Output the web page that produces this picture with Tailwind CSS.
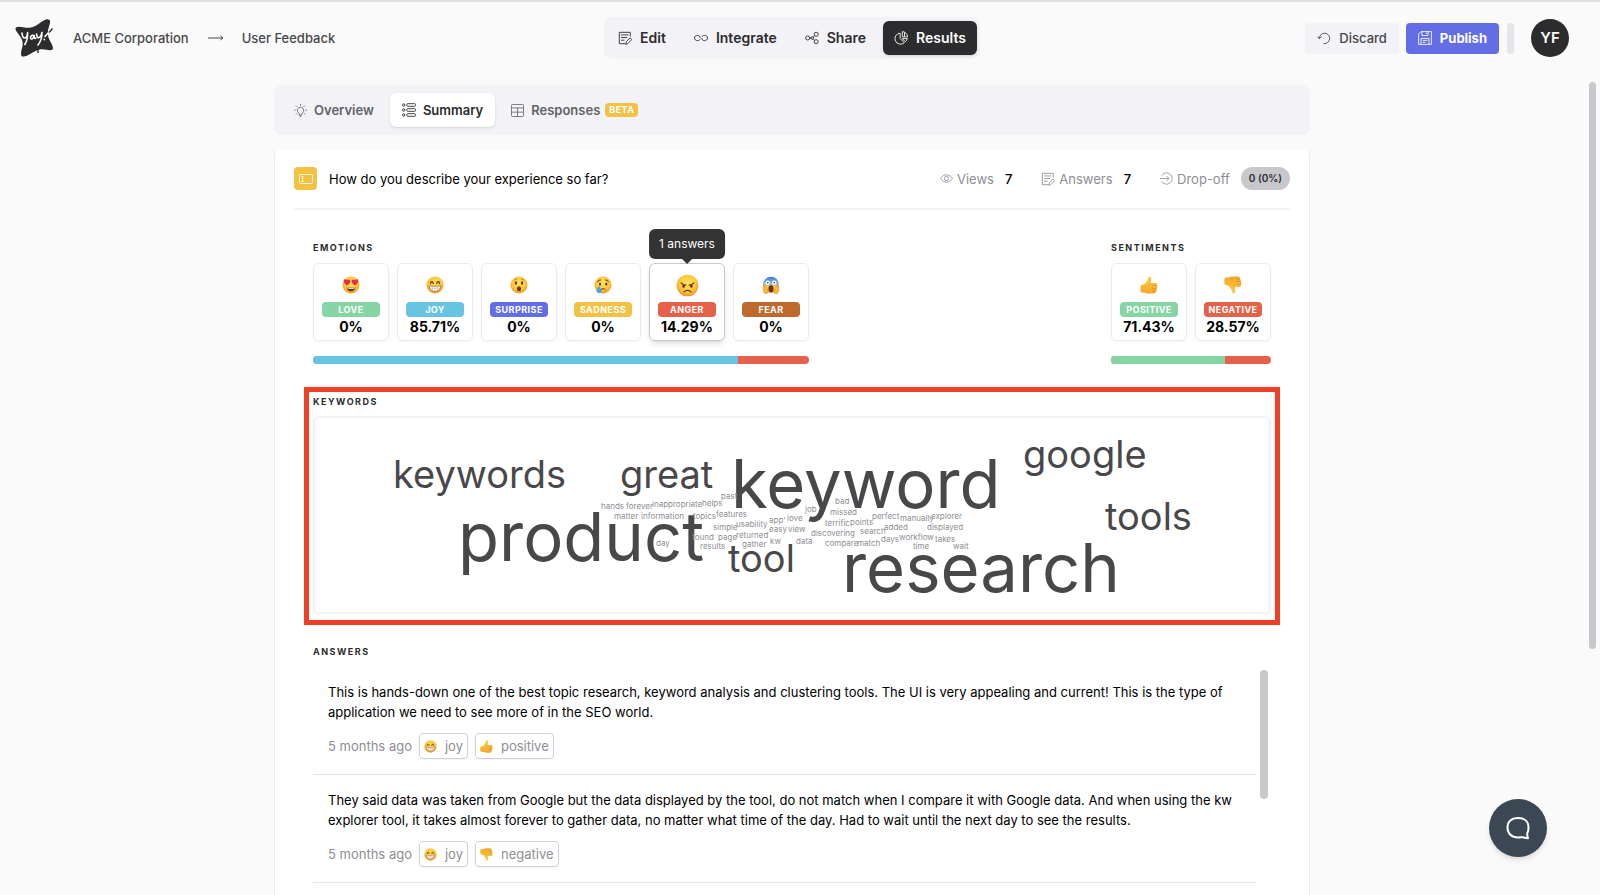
<!DOCTYPE html>
<html lang="en">
<head>
    <meta charset="UTF-8">
    <meta name="viewport" content="width=device-width, initial-scale=1.0">
    <title>User Feedback - Results</title>
    <script src="https://cdn.jsdelivr.net/npm/@tailwindcss/browser@4"></script>
</head>
<body class="relative flex h-screen flex-col overflow-hidden bg-[#fafafa] font-['Inter',sans-serif] text-[13px] leading-5 text-black">

    <!-- Shared icons and emoji -->
    <svg class="absolute size-0" aria-hidden="true">
        <defs>
            <radialGradient id="face" cx="50%" cy="40%" r="60%">
                <stop offset="0" stop-color="#ffe45c"/>
                <stop offset="0.65" stop-color="#fdc63a"/>
                <stop offset="1" stop-color="#ee932a"/>
            </radialGradient>
            <linearGradient id="fear" x1="0" y1="0" x2="0" y2="1">
                <stop offset="0" stop-color="#3d78dc"/>
                <stop offset="0.4" stop-color="#86b4ee"/>
                <stop offset="0.65" stop-color="#fccb45"/>
                <stop offset="1" stop-color="#f5a72f"/>
            </linearGradient>
            <linearGradient id="hand" x1="0" y1="0" x2="0" y2="1">
                <stop offset="0" stop-color="#ffd03f"/>
                <stop offset="1" stop-color="#f3a62c"/>
            </linearGradient>
        </defs>
        <symbol id="emoji-love" viewBox="0 0 36 36">
            <circle cx="18" cy="18" r="17" fill="url(#face)"/>
            <path d="M10.5 19C5 15 3 12.500 3.500 9.500c.6-3.400 5-4 6.800-.9 2.400-2.700 6.700-1.200 6.500 2.200-.2 3-2.600 5.500-6.300 8.200z" fill="#ee2b45"/>
            <path d="M25.500 19c5.500-4 7.500-6.500 7-9.500-.6-3.400-5-4-6.800-.9-2.400-2.700-6.700-1.200-6.500 2.200.2 3 2.600 5.500 6.300 8.200z" fill="#ee2b45"/>
            <path d="M9 22c5 2 13 2 18 0-.6 5.500-4 8.500-9 8.500S9.600 27.500 9 22z" fill="#6b3415"/>
            <path d="M10 22.600c5 1.600 11 1.600 16 0v1.800c-5 1.600-11 1.600-16 0z" fill="#fff"/>
        </symbol>
        <symbol id="emoji-joy" viewBox="0 0 36 36">
            <circle cx="18" cy="18" r="17" fill="url(#face)"/>
            <path d="M9 15c.6-5 4.800-5 5.500 0M21.500 15c.7-5 4.900-5 5.500 0" fill="none" stroke="#6b3415" stroke-width="2.600" stroke-linecap="round"/>
            <path d="M6.500 19.500c7 1.500 16 1.500 23 0 .2 6.500-4.500 11-11.500 11S6.300 26 6.500 19.500z" fill="#fff" stroke="#8a5020" stroke-width="1.300"/>
            <path d="M7.500 24.500h21M13 20.500v8.500M18 20.500v9.500M23 20.500v8.500" stroke="#b9a58d" stroke-width="1"/>
        </symbol>
        <symbol id="emoji-surprise" viewBox="0 0 36 36">
            <circle cx="18" cy="18" r="17" fill="url(#face)"/>
            <ellipse cx="12" cy="14" rx="2.300" ry="3.300" fill="#6b3415"/>
            <ellipse cx="24" cy="14" rx="2.300" ry="3.300" fill="#6b3415"/>
            <path d="M8.500 8.500c1-1.500 2.500-2.200 4.500-2M27.500 8.500c-1-1.500-2.500-2.200-4.500-2" fill="none" stroke="#a0641f" stroke-width="1.400" stroke-linecap="round"/>
            <ellipse cx="18" cy="25.500" rx="4.200" ry="5" fill="#6b3415"/>
        </symbol>
        <symbol id="emoji-sadness" viewBox="0 0 36 36">
            <circle cx="18" cy="18" r="17" fill="url(#face)"/>
            <ellipse cx="12" cy="16" rx="2.200" ry="3" fill="#6b3415"/>
            <ellipse cx="24.500" cy="16" rx="2.200" ry="3" fill="#6b3415"/>
            <path d="M7 11.500c1.500-2.500 3.500-3.500 6-3.500M29 11.500c-1.500-2.500-3.500-3.500-6-3.500M14 27.500c2.500-3 6.500-3 9 0" fill="none" stroke="#6b3415" stroke-width="2" stroke-linecap="round"/>
            <path d="M10 20c3.500 4.500 5 7 5 9.500 0 2.800-2.200 4.500-5 4.500s-5-1.700-5-4.500c0-2.500 1.500-5 5-9.500z" fill="#3fa5ee"/>
        </symbol>
        <symbol id="emoji-anger" viewBox="0 0 36 36">
            <circle cx="18" cy="18" r="17" fill="url(#face)"/>
            <ellipse cx="12" cy="19" rx="2" ry="2.500" fill="#6b3415"/>
            <ellipse cx="24" cy="19" rx="2" ry="2.500" fill="#6b3415"/>
            <path d="M8 14c2 2.300 4.500 3.300 7.500 3.300M28 14c-2 2.300-4.500 3.300-7.500 3.300M12.500 28c3-3 8-3 11 0" fill="none" stroke="#6b3415" stroke-width="2" stroke-linecap="round"/>
        </symbol>
        <symbol id="emoji-fear" viewBox="0 0 36 36">
            <circle cx="18" cy="17.500" r="16" fill="url(#fear)"/>
            <circle cx="11.500" cy="13.500" r="4.300" fill="#fff"/>
            <circle cx="24.500" cy="13.500" r="4.300" fill="#fff"/>
            <circle cx="11.500" cy="13.500" r="1.600" fill="#4a2b17"/>
            <circle cx="24.500" cy="13.500" r="1.600" fill="#4a2b17"/>
            <path d="M18 18.500c3.600 0 5 3 5 7s-1.800 7.500-5 7.500-5-3.500-5-7.500 1.400-7 5-7z" fill="#6b3415"/>
            <path d="M2.500 19c2-1.500 3.500.5 4.500 2.500l4.500 6.500c1.500 3 .5 7-2.500 7.500-4 .6-6.500-3-6.500-7zM33.500 19c-2-1.500-3.500.5-4.500 2.500L24.500 28c-1.500 3-.5 7 2.500 7.500 4 .6 6.500-3 6.500-7z" fill="#f9b637" stroke="#d9851f" stroke-width="1"/>
        </symbol>
        <symbol id="emoji-thumb" viewBox="0 0 36 36">
            <path d="M17.500 1c3-.8 4.800 1 4.900 4.500.1 3-.9 5.500-1.200 8.500h10.300c3.200 0 4.200 4 1.700 5.300 2.600 1.200 2.300 5-.4 5.700 1.700 1.400 1.200 4.600-1.200 5.100 1 2.300-.4 4.900-3.600 4.900H17c-3 0-5-1.400-7-1.700l-8.500-.8c-1-4.500-1-9.500 0-14.500l6.500-1c4-3.500 8-8.500 9.500-16z" fill="url(#hand)"/>
            <path d="M33 19.300h-7.500M32.500 25h-7M31.400 30.100h-5.900" stroke="#d98a1e" stroke-width="1.300" stroke-linecap="round"/>
            <path d="M21 14c-2 .8-3.200 2.500-3.400 4.500" fill="none" stroke="#e0951f" stroke-width="1.200" stroke-linecap="round"/>
        </symbol>
        <symbol id="icon-note" viewBox="0 0 16 16">
            <path d="M14 6V1.500H1.500v13H8M4 4.500h7.500M4 7.500h6M4 10.500h3M9 14.800l.5-2.600 4.300-4.300 1.900 1.900-4.300 4.300z" fill="none" stroke="currentColor" stroke-linejoin="round" stroke-linecap="round"/>
        </symbol>
    </svg>

    <header class="grid grid-cols-[1fr_auto_1fr] items-center border-t-2 border-[#e0e0e0] py-[15px] pr-[31px] pl-[15px]">
        <div class="flex items-center">
            <a href="#" aria-label="Yay! home">
                <svg class="size-[38px]" viewBox="0 0 38 38">
                    <path d="M1 8.500c3-2.300 8 .8 13.500.3C22 8 27 1 32 .3c3.600-.3 3.600 2.500 2.400 6-1.600 4.700-2.400 9-.2 14 1.500 3.500 5 8 3.300 10.200-2.500 2.300-8-1.300-13.500.2C18 32.300 13 37.300 8.500 37.600 4.800 37.600 6 33 7.300 28c1-4.500.2-6.800-2.500-11C2.300 13.200-.8 10.500 1 8.500z" fill="#2c2c2e"/>
                    <path d="M7 14c.3 3.500 1.200 5.300 3 5 1.400-.3 2.300-2.700 2.600-5.400M12.600 14c.2 4.500-.6 8-2.800 11.500M19 16.500c-2.200-.7-3.800.8-3.500 2.600.3 1.500 2.600 1.200 3.400-1.500l.3-1.200c-.2 2.200.2 3.400 1.500 2.800M21.600 15c.1 2.500.8 3.900 2.200 3.600 1.500-.3 2.500-2.500 3-5M27 13.600c.2 5.500-1.400 9-4 12.400M35.500 11.500l-5.500 6M29.300 20.400v.4" fill="none" stroke="#fff" stroke-width="1.600" stroke-linecap="round"/>
                    <path d="M37.500 9.500l-3.500 4M23 27v7" stroke="#2c2c2e" stroke-width="1.400"/>
                </svg>
            </a>
            <nav class="ml-5 flex items-center text-[#48484a]" aria-label="Breadcrumb">
                <a href="#" class="font-medium">ACME Corporation</a>
                <svg class="mr-[18px] ml-[19px] h-2 w-4" viewBox="0 0 16 8" fill="none" stroke="#48484a"><path d="M0 4h15M12.500 2L15 4l-2.500 2"/></svg>
                <a href="#" class="font-medium">User Feedback</a>
            </nav>
        </div>

        <nav class="flex gap-[6px] rounded-lg bg-[#f2f2f7] px-[3px] py-1 text-sm font-semibold text-[#2c2c2e]" aria-label="Form">
            <a href="#" class="flex h-[34px] items-center gap-2 px-[11px]">
                <svg class="size-[14px]"><use href="#icon-note"/></svg>Edit
            </a>
            <a href="#" class="flex h-[34px] items-center gap-2 px-[11px]">
                <svg class="size-[14px]" viewBox="0 0 16 16" fill="none" stroke="currentColor"><path d="M6.800 9.500C6.300 10.600 5.500 11 4 11 2 11 .6 9.800.6 8S2 5 4 5s3 1 3 3M9.200 6.500C9.700 5.400 10.500 5 12 5c2 0 3.400 1.200 3.400 3S14 11 12 11 9 10 9 8"/></svg>Integrate
            </a>
            <a href="#" class="flex h-[34px] items-center gap-2 px-[11px]">
                <svg class="size-[14px]" viewBox="0 0 16 16" fill="none" stroke="currentColor"><circle cx="3" cy="8" r="2.300"/><circle cx="8.200" cy="8" r="1.500"/><circle cx="12.800" cy="3.800" r="2.300"/><circle cx="12.800" cy="12.200" r="2.300"/><path d="M5.300 8h1.400M9.300 7l1.800-1.600M9.300 9l1.800 1.600"/></svg>Share
            </a>
            <a href="#" class="flex h-[34px] items-center gap-2 rounded-md bg-[#2c2c2e] px-[11px] text-white shadow" aria-current="page">
                <svg class="size-[14px]" viewBox="0 0 16 16" fill="none" stroke="currentColor"><path d="M7 2.500a6.300 6.300 0 1 0 4.800 10.800L7 8.500zM9.500.7v6h6A6.300 6.300 0 0 0 9.500.7zM9.500 8.700l3.500 3.600a6 6 0 0 0 2.200-3.600zM12 1.500v5"/></svg>Results
            </a>
        </nav>

        <div class="flex items-center justify-end">
            <button class="flex h-[31px] items-center gap-2 rounded bg-[#f2f2f7] px-3 font-medium text-[#48484a]">
                <svg class="size-[14px]" viewBox="0 0 16 16" fill="none" stroke="currentColor"><path d="M2.500 8.500a6 6 0 1 1 5.500 6M.5 6.500l2 2.200L5 6.800" stroke-linecap="round"/></svg>Discard
            </button>
            <button class="ml-[7px] flex h-[31px] items-center gap-2 rounded bg-[#636ee6] px-3 font-bold text-white">
                <svg class="size-[14px]" viewBox="0 0 16 16" fill="none" stroke="currentColor"><path d="M3.500.7h11.800v14.600H.7V3.500zM4.500.7v4.500h7V.7M9.500 2v1.500M3.500 15.300V8.500h9v6.800M5.500 10.700h5M5.500 13h3"/></svg>Publish
            </button>
            <div class="ml-2 h-[31px] w-[7px] rounded bg-[#e5e5ea]"></div>
            <button class="ml-[17px] size-[38px] rounded-full bg-[#2c2c2e] text-[15px] font-semibold text-white" aria-label="Account">YF</button>
        </div>
    </header>

    <main class="min-h-0 flex-1 overflow-hidden pt-[11px] pr-4">
        <div class="mx-auto flex h-full max-w-[1036px] flex-col">
            <nav class="flex gap-1 rounded-lg bg-[#f2f2f7] p-2 font-semibold text-[#636366]" aria-label="Results">
                <a href="#" class="flex h-[34px] items-center gap-[7px] px-3">
                    <svg class="size-[13px]" viewBox="0 0 16 16" fill="none" stroke="currentColor" stroke-linecap="round"><path d="M6.500 11.800a4 4 0 1 1 3 0v2h-3zM7.500 15.500h1M8 .5v1M2.800 2.300l.8.8M13.200 2.300l-.8.8M.5 7.500h1M14.500 7.500h1M2.500 12.500l.7-.6M13.500 12.500l-.7-.6"/></svg>Overview
                </a>
                <a href="#" class="flex h-[34px] items-center gap-[7px] rounded-md bg-white px-3 text-[#2c2c2e] shadow-sm" aria-current="page">
                    <svg class="size-[14px]" viewBox="0 0 16 16" fill="none" stroke="currentColor"><circle cx="2" cy="2.300" r="1.400"/><circle cx="2" cy="8" r="1.400"/><circle cx="2" cy="13.700" r="1.400"/><rect x="5.500" y=".8" width="10" height="3" rx="1"/><rect x="5.500" y="6.500" width="10" height="3" rx="1"/><rect x="5.500" y="12.200" width="10" height="3" rx="1"/></svg>Summary
                </a>
                <a href="#" class="flex h-[34px] items-center gap-[7px] px-3">
                    <svg class="size-[13px]" viewBox="0 0 16 16" fill="none" stroke="currentColor"><rect x=".6" y=".6" width="14.800" height="14.800" rx="1"/><path d="M.6 4.800h14.800M.6 10h14.800M8 4.800v10.600"/></svg>
                    <span>Responses</span>
                    <span class="-ml-[2px] rounded bg-[#f2c244] px-1 text-[9px] leading-[14px] font-bold tracking-wider text-white">BETA</span>
                </a>
            </nav>

            <section class="mt-[15px] flex-1 rounded-t border-x border-[#ebebed] bg-white px-[19px]">
                <div class="flex h-[60px] items-center border-b-2 border-[#f2f2f7] pb-px">
                    <span class="flex size-[23px] items-center justify-center rounded bg-[#f2c244]">
                        <svg class="size-[14px]" viewBox="0 0 14 14" fill="none" stroke="#fff" stroke-opacity=".8"><rect x=".5" y="2.500" width="13" height="9" rx="1"/><path d="M2.500 4.500h2M3.500 4.500v5M2.500 9.500h2"/></svg>
                    </span>
                    <h1 class="ml-3">How do you describe your experience so far?</h1>
                    <div class="ml-auto flex items-center gap-[29px]">
                        <div class="flex items-center gap-1 text-[#8e8e93]">
                            <svg class="size-[13px]" viewBox="0 0 16 16" fill="none" stroke="currentColor"><path d="M.6 8C4 2 12 2 15.400 8 12 14 4 14 .6 8z"/><circle cx="8" cy="8" r="2.700"/></svg>
                            <span>Views</span><span class="ml-[7px] font-medium text-black">7</span>
                        </div>
                        <div class="flex items-center gap-1 text-[#8e8e93]">
                            <svg class="size-[14px]"><use href="#icon-note"/></svg>
                            <span>Answers</span><span class="ml-[7px] font-medium text-black">7</span>
                        </div>
                        <div class="flex items-center gap-1 text-[#8e8e93]">
                            <svg class="size-[13px]" viewBox="0 0 16 16" fill="none" stroke="currentColor"><path d="M2 4.500a7 7 0 1 1 0 7M0 8h11M8 5l3 3-3 3"/></svg>
                            <span>Drop-off</span>
                            <span class="ml-[7px] rounded-full bg-[#c7c7cc] px-2 text-[10px] leading-[23px] font-semibold text-[#2c2c2e]">0 (0%)</span>
                        </div>
                    </div>
                </div>

                <div class="px-[19px] pt-[30px]">
                    <div class="flex justify-between">
                        <div>
                            <h2 class="text-[9px] leading-4 font-bold tracking-[1.5px] text-[#2c2c2e]">EMOTIONS</h2>
                            <div class="mt-[7px] flex gap-2 text-center">
                                <div class="w-[76px] rounded-md border border-[#ebebed] px-2 pt-2 pb-[3px] shadow-xs">
                                    <div class="flex h-[26px] items-center justify-center"><svg class="size-[18px]"><use href="#emoji-love"/></svg></div>
                                    <div class="mt-1 rounded bg-[#86d5a4] text-[9px] leading-[15px] font-bold tracking-wider text-white">LOVE</div>
                                    <div class="text-sm leading-5 font-bold">0%</div>
                                </div>
                                <div class="w-[76px] rounded-md border border-[#ebebed] px-2 pt-2 pb-[3px] shadow-xs">
                                    <div class="flex h-[26px] items-center justify-center"><svg class="size-[18px]"><use href="#emoji-joy"/></svg></div>
                                    <div class="mt-1 rounded bg-[#67c5e2] text-[9px] leading-[15px] font-bold tracking-wider text-white">JOY</div>
                                    <div class="text-sm leading-5 font-bold">85.71%</div>
                                </div>
                                <div class="w-[76px] rounded-md border border-[#ebebed] px-2 pt-2 pb-[3px] shadow-xs">
                                    <div class="flex h-[26px] items-center justify-center"><svg class="size-[18px]"><use href="#emoji-surprise"/></svg></div>
                                    <div class="mt-1 rounded bg-[#636ee6] text-[9px] leading-[15px] font-bold tracking-wider text-white">SURPRISE</div>
                                    <div class="text-sm leading-5 font-bold">0%</div>
                                </div>
                                <div class="w-[76px] rounded-md border border-[#ebebed] px-2 pt-2 pb-[3px] shadow-xs">
                                    <div class="flex h-[26px] items-center justify-center"><svg class="size-[18px]"><use href="#emoji-sadness"/></svg></div>
                                    <div class="mt-1 rounded bg-[#f2c244] text-[9px] leading-[15px] font-bold tracking-wider text-white">SADNESS</div>
                                    <div class="text-sm leading-5 font-bold">0%</div>
                                </div>
                                <div class="relative w-[76px] rounded-md border border-[#c7c7cc] px-2 pt-2 pb-[3px] shadow-md">
                                    <div class="absolute bottom-full left-1/2 mb-[5px] -translate-x-1/2 rounded-md bg-[#333333] px-[10px] text-xs leading-[30px] whitespace-nowrap text-white" role="tooltip">
                                        1 answers
                                        <span class="absolute top-full left-1/2 -translate-x-1/2 border-x-[5px] border-t-[5px] border-x-transparent border-t-[#333333]"></span>
                                    </div>
                                    <div class="flex h-[26px] items-center justify-center"><svg class="size-[23px]"><use href="#emoji-anger"/></svg></div>
                                    <div class="mt-1 rounded bg-[#e66149] text-[9px] leading-[15px] font-bold tracking-wider text-white">ANGER</div>
                                    <div class="text-sm leading-5 font-bold">14.29%</div>
                                </div>
                                <div class="w-[76px] rounded-md border border-[#ebebed] px-2 pt-2 pb-[3px] shadow-xs">
                                    <div class="flex h-[26px] items-center justify-center"><svg class="size-[18px]"><use href="#emoji-fear"/></svg></div>
                                    <div class="mt-1 rounded bg-[#c0692c] text-[9px] leading-[15px] font-bold tracking-wider text-white">FEAR</div>
                                    <div class="text-sm leading-5 font-bold">0%</div>
                                </div>
                            </div>
                            <div class="mt-[15px] flex h-2 overflow-hidden rounded bg-[#e66149]">
                                <div class="bg-[#67c5e2]" style="width: 85.71%"></div>
                            </div>
                        </div>

                        <div>
                            <h2 class="text-[9px] leading-4 font-bold tracking-[1.5px] text-[#2c2c2e]">SENTIMENTS</h2>
                            <div class="mt-[7px] flex gap-2 text-center">
                                <div class="w-[76px] rounded-md border border-[#ebebed] px-2 pt-2 pb-[3px] shadow-xs">
                                    <div class="flex h-[26px] items-center justify-center"><svg class="size-[18px]"><use href="#emoji-thumb"/></svg></div>
                                    <div class="mt-1 rounded bg-[#86d5a4] text-[9px] leading-[15px] font-bold tracking-wider text-white">POSITIVE</div>
                                    <div class="text-sm leading-5 font-bold">71.43%</div>
                                </div>
                                <div class="w-[76px] rounded-md border border-[#ebebed] px-2 pt-2 pb-[3px] shadow-xs">
                                    <div class="flex h-[26px] items-center justify-center"><svg class="size-[18px] -scale-y-100"><use href="#emoji-thumb"/></svg></div>
                                    <div class="mt-1 rounded bg-[#e66149] text-[9px] leading-[15px] font-bold tracking-wider text-white">NEGATIVE</div>
                                    <div class="text-sm leading-5 font-bold">28.57%</div>
                                </div>
                            </div>
                            <div class="mt-[15px] flex h-2 overflow-hidden rounded bg-[#e66149]">
                                <div class="bg-[#86d5a4]" style="width: 71.43%"></div>
                            </div>
                        </div>
                    </div>

                    <!-- Keyword cloud -->
                    <div class="-mx-[9px] mt-[23px] border-5 border-[#ee4025] px-1 pt-[2px] pb-[6px]">
                        <h2 class="text-[9px] leading-4 font-bold tracking-[1.5px] text-[#2c2c2e]">KEYWORDS</h2>
                        <div class="mt-[6px] rounded-md border-2 border-[#f2f2f7]">
                            <svg class="block w-full" viewBox="0 0 954 194">
                                <g class="fill-[#48484a] text-[67px]">
                                    <text x="143" y="143">product</text>
                                    <text x="416" y="90">keyword</text>
                                    <text x="527" y="174">research</text>
                                </g>
                                <g class="fill-[#48484a] text-[38px]">
                                    <text x="78" y="70">keywords</text>
                                    <text x="305" y="70">great</text>
                                    <text x="413" y="154">tool</text>
                                    <text x="708" y="50">google</text>
                                    <text x="790" y="112">tools</text>
                                </g>
                                <g class="fill-[#8e8e93] text-[8px]">
                                    <text x="406" y="81">past</text>
                                    <text x="286" y="91">hands</text>
                                    <text x="311" y="91">forever</text>
                                    <text x="337" y="89">inappropriate</text>
                                    <text x="387" y="88">helps</text>
                                    <text x="299" y="101">matter</text>
                                    <text x="326" y="101">information</text>
                                    <text x="378" y="101">topics</text>
                                    <text x="401" y="99">features</text>
                                    <text x="398" y="112">simple</text>
                                    <text x="421" y="109">usability</text>
                                    <text x="454" y="105">app'</text>
                                    <text x="472" y="103">love</text>
                                    <text x="454" y="114">easy</text>
                                    <text x="473" y="114">view</text>
                                    <text x="377" y="122">found</text>
                                    <text x="403" y="122">page</text>
                                    <text x="421" y="120">returned</text>
                                    <text x="385" y="131">results</text>
                                    <text x="427" y="129">gather</text>
                                    <text x="455" y="126">kw</text>
                                    <text x="481" y="126">data</text>
                                    <text x="341" y="128">day</text>
                                    <text x="490" y="94">job</text>
                                    <text x="520" y="86">bad</text>
                                    <text x="515" y="97">missed</text>
                                    <text x="510" y="108">terrific</text>
                                    <text x="535" y="107">points</text>
                                    <text x="496" y="118">discovering</text>
                                    <text x="545" y="116">search</text>
                                    <text x="569" y="112">added</text>
                                    <text x="510" y="128">compare</text>
                                    <text x="542" y="128">match</text>
                                    <text x="566" y="124">days</text>
                                    <text x="584" y="122">workflow</text>
                                    <text x="620" y="124">takes</text>
                                    <text x="598" y="131">time</text>
                                    <text x="638" y="131">wait</text>
                                    <text x="557" y="101">perfect</text>
                                    <text x="585" y="103">manually</text>
                                    <text x="616" y="101">explorer</text>
                                    <text x="612" y="112">displayed</text>
                                </g>
                            </svg>
                        </div>
                    </div>

                    <h2 class="mt-[19px] text-[9px] leading-4 font-bold tracking-[1.5px] text-[#2c2c2e]">ANSWERS</h2>
                    <div class="relative mt-[7px] pr-[15px]">
                        <article class="border-b border-[#e5e5ea] px-[15px] py-[15px]">
                            <p>This is hands-down one of the best topic research, keyword analysis and clustering tools. The UI is very appealing and current! This is the type of application we need to see more of in the SEO world.</p>
                            <div class="mt-[11px] flex items-center gap-[7px] text-[#8e8e93]">
                                <time>5 months ago</time>
                                <span class="flex h-[26px] items-center gap-2 rounded border border-[#d1d1d6] px-1 shadow-xs"><svg class="size-[13px]"><use href="#emoji-joy"/></svg>joy</span>
                                <span class="flex h-[26px] items-center gap-2 rounded border border-[#d1d1d6] px-1 shadow-xs"><svg class="size-[13px]"><use href="#emoji-thumb"/></svg>positive</span>
                            </div>
                        </article>
                        <article class="border-b border-[#e5e5ea] px-[15px] py-[15px]">
                            <p>They said data was taken from Google but the data displayed by the tool, do not match when I compare it with Google data. And when using the kw explorer tool, it takes almost forever to gather data, no matter what time of the day. Had to wait until the next day to see the results.</p>
                            <div class="mt-[11px] flex items-center gap-[7px] text-[#8e8e93]">
                                <time>5 months ago</time>
                                <span class="flex h-[26px] items-center gap-2 rounded border border-[#d1d1d6] px-1 shadow-xs"><svg class="size-[13px]"><use href="#emoji-joy"/></svg>joy</span>
                                <span class="flex h-[26px] items-center gap-2 rounded border border-[#d1d1d6] px-1 shadow-xs"><svg class="size-[13px] -scale-y-100"><use href="#emoji-thumb"/></svg>negative</span>
                            </div>
                        </article>
                        <div class="absolute top-[3px] right-[3px] h-[129px] w-2 rounded bg-[#c7c7cc]"></div>
                    </div>
                </div>
            </section>
        </div>
    </main>

    <!-- Page scrollbar -->
    <div class="absolute top-[82px] right-1 h-[567px] w-[7px] rounded bg-[#c7c7cc]"></div>

    <button class="absolute right-[53px] bottom-[38px] flex size-[58px] items-center justify-center rounded-full bg-[#3b4853] shadow-md" aria-label="Open chat">
        <svg class="size-6" viewBox="0 0 24 24" fill="none" stroke="#fff" stroke-width="2" stroke-linejoin="round"><path d="M12 2C5 2 1.500 6 1.500 11.500S5 21.500 12 21.500c2 0 3.500-.3 5-.3 1.500.5 3 1 5 1-.6-1.500-.8-3-.8-4.800 1-1.600 1.300-3.300 1.300-5.900C22.500 6 19 2 12 2z"/></svg>
    </button>
</body>
</html>
